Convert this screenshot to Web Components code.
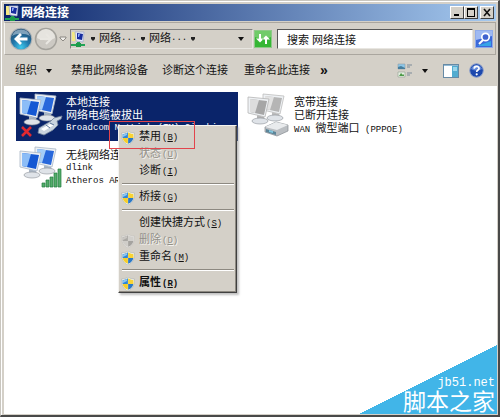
<!DOCTYPE html>
<html lang="zh-CN">
<head>
<meta charset="utf-8">
<title>网络连接</title>
<style>
html, body { height: 100%; margin: 0; }
body {
  font: 11px/13px "Liberation Sans", "Noto Sans CJK SC", sans-serif;
  color: #111;
  --face: #d4d0c8;
  --shade: #808080;
  --navy: #0a246a;
  --mono: "Liberation Mono", "Noto Sans CJK SC", monospace;
}
</style>
</head>
<body>
<network-window></network-window>

<script>
const define = (name, html, setup) => {
  const template = document.createElement('template');
  template.innerHTML = '<style>*{box-sizing:border-box} button{font:inherit;color:inherit;border:0;background:none;padding:0;margin:0;display:flex;align-items:center;justify-content:flex-start;white-space:nowrap} svg{display:block;flex:none}</style>' + html;
  customElements.define(name, class extends HTMLElement {
    constructor() {
      super();
      this.attachShadow({ mode: 'open' }).append(template.content.cloneNode(true));
    }
    connectedCallback() { if (setup) setup(this, this.shadowRoot); }
  });
};

const monitor = (x, y, a, b, c) => `
  <path d="M${x + 9} ${y + 18}l7 2 1 5-8-1z" fill="${c}"/>
  <ellipse cx="${x + 12}" cy="${y + 24}" rx="8" ry="3" fill="#dfe3e8" stroke="#8b9097" stroke-width=".6"/>
  <path d="M${x} ${y}l21 2-4 18-17-4z" fill="#eef1f4" stroke="${c}" stroke-width=".8"/>
  <path d="M${x + 2} ${y + 2}l17 2-3 14-14-3z" fill="${a}"/>
  <path d="M${x + 2} ${y + 2}l9 1-4 13-5-1z" fill="${b}"/>`;

const icons = {
  network: ['0 0 14 16', `<path d="M1 1h7v9H1z" fill="#f4e984"/><path d="M4 1l9 0-1 10-7-1z" fill="#e7eaf8" stroke="#9ba6c8" stroke-width=".7"/><path d="M6 2l6 1-1 6-5-1z" fill="#172c9e"/><path d="M7 3l2 0-1 3-1 0z" fill="#8cabf4"/><path d="M6 11h3v2h5v2H0v-2h6z" fill="#21a456"/><path d="M5 12h5v4H5z" fill="#1d9b4c"/>`],
  shield: ['0 0 14 14', `<path d="M7 0C5 1.500 3 2 .5 2 .5 8 2 12 7 14 12 12 13.500 8 13.500 2 11 2 9 1.500 7 0z" fill="#f4f5ee" stroke="#aab0ae" stroke-width=".6"/><path d="M6.900 1.300C5 2.500 3.500 3 1.600 3.100V7h5.300z" fill="#2d86d8"/><path d="M7.100 1.300C9 2.500 10.500 3 12.400 3.100V7H7.100z" fill="#f8d335"/><path d="M6.900 7v5.800C3.500 11.500 2 9.500 1.700 7z" fill="#f4cd2c"/><path d="M7.100 7v5.800C10.500 11.500 12 9.500 12.300 7z" fill="#2d79c6"/><path d="M2 3.500l4-1.500v2l-4 2z" fill="#8cc5ef"/>`],
  local: ['0 0 46 48', monitor(18, 2, '#2868db', '#a4cdf8', '#a9b7c7') + monitor(3, 6, '#1558d3', '#8cbdf7', '#aab6c5') + `<path d="M22 36l12-7 3-3 8-2-1 3-4 2 1 4-5 5-9 5-6-2z" fill="#cad4df" stroke="#73849c" stroke-width=".8"/><path d="M24 37l9-5 4 1-10 6z" fill="#fff"/><path d="M29 33l4 3m0-5l4 2" stroke="#5f789b"/><path d="M5 35l9 9m0-9l-9 9" stroke="#df2930" stroke-width="2.600"/>`],
  wireless: ['0 0 46 48', monitor(18, 2, '#2868db', '#a4cdf8', '#a9b7c7') + monitor(3, 6, '#1558d3', '#8cbdf7', '#aab6c5') + `<g fill="#54ad6b" stroke="#247d40" stroke-width=".7"><path d="M25 38h3v4h-3zM29 35h3v7h-3zM33 32h3v10h-3zM37 28h3v14h-3zM41 24h3v18h-3z"/></g>`],
  broadband: ['0 0 46 48', monitor(18, 2, '#b5b5b5', '#e2e2e2', '#bdbdbd') + monitor(3, 5, '#a6a6a6', '#dddddd', '#b5b5b5') + `<path d="M20 35l11-5 12 3v6l-11 5-12-4z" fill="#babec2" stroke="#858b90" stroke-width=".7"/><path d="M20 35l11-5 12 3-11 5z" fill="#e9ebed"/><path d="M21 37l10 3v3l-10-3z" fill="#5c8599"/><path d="M24 38l4 1v2l-4-1z" fill="#82c7df"/>`],
  back: ['0 0 24 26', `<defs><radialGradient id="g" cx=".5" cy=".9" r=".8"><stop stop-color="#3fc9ec"/><stop offset=".5" stop-color="#2179ad"/><stop offset="1" stop-color="#245076"/></radialGradient></defs><circle cx="12" cy="13" r="11.300" fill="#a9b0b5"/><circle cx="12" cy="13" r="10.300" fill="url(#g)"/><path d="M3 10a9.500 9.500 0 0 1 18 0c-5-3-13-3-18 0z" fill="#b0cbdc" opacity=".65"/><path d="M18.500 13H7m5-5l-5 5 5 5" fill="none" stroke="#fff" stroke-width="2.800"/>`],
  forward: ['0 0 24 26', `<circle cx="12" cy="13" r="10.500" fill="#ccc9c3" stroke="#a4a29c" stroke-width="1.500"/><path d="M3 12a9 9 0 0 1 18 0c-5 3-13 3-18 0z" fill="#e6e4df"/><path d="M6 13h11m-5-5l5 5-5 5" fill="none" stroke="#e9e7e2" stroke-width="2"/>`],
  history: ['0 0 8 6', `<path d="M1 1h6v1L4 5 1 2z" fill="#f0eeea" stroke="#77746f" stroke-width=".8"/>`],
  arrow: ['0 0 6 4', `<path d="M0 0h6L3 4z" fill="#111"/>`],
  dot: ['0 0 4 4', `<path d="M0 0h4v2L2 4 0 2z" fill="#222"/>`],
  refresh: ['0 0 18 18', `<rect x=".5" y=".5" width="17" height="17" fill="#35b634" stroke="#8dc987"/><path d="M1 1h16v6c-5 3-11 2-16 0z" fill="#70cb69"/><path d="M12 14V9M6 4v5" stroke="#fff" stroke-width="2"/><path d="M8 9.500l4-4 4 4zM2 8.500l4 4 4-4z" fill="#fff"/>`],
  search: ['0 0 18 18', `<rect x=".5" y=".5" width="17" height="17" fill="#3c69d9" stroke="#8fabea"/><path d="M1 1h16v5L1 10z" fill="#9eb9f2"/><path d="M2 16h14v-5z" fill="#35a4e8"/><circle cx="10.500" cy="7" r="3.700" fill="#3f62cf" stroke="#fff" stroke-width="1.700"/><path d="M8 10l-4 4" stroke="#fff" stroke-width="2"/>`],
  views: ['0 0 16 16', `<path d="M1 1h7v5H1z" fill="#8cc6e8" stroke="#8d9da7" stroke-width=".6"/><path d="M1 4l3-1 4 2v1H1z" fill="#477e9d"/><path d="M1 9h7v5H1z" fill="#e6efe3" stroke="#929d91" stroke-width=".6"/><path d="M2 13l2-3 2 2 1-1v2z" fill="#4f9b49"/><path d="M10 2h5M10 4h3M10 10h5M10 12h3" stroke="#7c8b99"/>`],
  pane: ['0 0 16 14', `<rect x=".5" y=".5" width="15" height="13" fill="#fff" stroke="#668aa5"/><path d="M1 1h14v1H1z" fill="#92bad5"/><path d="M9 2h6v11H9z" fill="#51acd0"/><path d="M10 3h4v4h-4z" fill="#9cd6eb"/>`],
  help: ['0 0 15 15', `<circle cx="7.500" cy="7.500" r="6.800" fill="#1d48ad" stroke="#8c9fcb"/><path d="M2 6a5.800 5.800 0 0 1 11 0c-4 2-7 2-11 0z" fill="#5f86d7"/><path d="M5.200 5.700c0-3 4.800-3 4.800-.3 0 1.700-2.300 1.600-2.300 3.500" fill="none" stroke="#fff" stroke-width="1.700"/><circle cx="7.700" cy="11.300" r="1.100" fill="#fff"/>`],
  minimize: ['0 0 10 9', `<path d="M2 6h5v2H2z"/>`],
  maximize: ['0 0 10 9', `<path d="M1 0h8v9H1zM2 2v6h6V2z" fill-rule="evenodd"/>`],
  close: ['0 0 10 9', `<path d="M2 1l6 7M8 1L2 8" stroke="#111" stroke-width="1.600"/>`]
};

define('ui-icon', `<style>:host{display:block;flex:none}span{display:block}</style><span></span>`, (el, root) => {
  const [box, art] = icons[el.getAttribute('name')];
  const [, , w, h] = box.split(' ');
  root.querySelector('span').innerHTML = `<svg viewBox="${box}" width="${w}" height="${h}" aria-hidden="true">${art}</svg>`;
});

define('title-bar', `<style>
  :host{display:flex;align-items:center;height:17px;padding:0 2px 0 1px;background:linear-gradient(90deg,var(--navy),#a6caf0);color:#fff}
  b{flex:1;margin-left:2px;font-size:12px;line-height:16px}
  button{width:14px;height:13px;justify-content:center;background:var(--face);border:1px solid;border-color:#fff #404040 #404040 #fff}
  button:last-child{margin-left:2px}
</style>
<ui-icon name="network"></ui-icon><b><slot></slot></b>
<button aria-label="最小化"><ui-icon name="minimize"></ui-icon></button>
<button aria-label="最大化"><ui-icon name="maximize"></ui-icon></button>
<button aria-label="关闭"><ui-icon name="close"></ui-icon></button>`);

define('nav-bar', `<style>
  :host{display:flex;align-items:center;height:33px;margin-top:1px;padding:0 2px 0 4px;border:1px solid;border-color:#aaa69f #aaa69f #aaa69f #f4f3f0}
  .forward{margin-left:1px}
  .history{margin:0 3px 0 1px}
  .address{display:flex;align-items:center;flex:181 1 0;min-width:0;height:20px;border:1px solid;border-color:var(--shade) #e8e6e1 #e8e6e1 var(--shade)}
  .crumb{width:50px;gap:4px}
  .first{margin-left:6px}
  .dots{font:9px/13px var(--mono)}
  .crumb span{margin-left:-4px}
  .drop{margin-left:auto;padding:4px 8px}
  .refresh{margin:0 5px 0 1px}
  input{flex:176 1 0;min-width:0;height:20px;margin:0 2px 0 0;padding:0 9px;font:inherit;color:#111;background:#fff;border:1px solid;border-color:#555 #e8e6e1 #e8e6e1 #555;border-radius:0;outline:0}
</style>
<button aria-label="后退"><ui-icon name="back"></ui-icon></button>
<button class="forward" aria-label="前进"><ui-icon name="forward"></ui-icon></button>
<button class="history" aria-label="历史"><ui-icon name="history"></ui-icon></button>
<div class="address">
  <ui-icon name="network"></ui-icon>
  <button class="crumb first"><ui-icon name="dot"></ui-icon>网络<span class="dots">...</span></button>
  <button class="crumb"><ui-icon name="dot"></ui-icon>网络<span class="dots">...</span></button>
  <button aria-label="展开"><ui-icon name="dot"></ui-icon></button>
  <button class="drop" aria-label="地址列表"><ui-icon name="arrow"></ui-icon></button>
</div>
<button class="refresh" aria-label="刷新"><ui-icon name="refresh"></ui-icon></button>
<input type="text" aria-label="搜索" value="搜索 网络连接">
<button aria-label="搜索"><ui-icon name="search"></ui-icon></button>`);

define('command-bar', `<style>
  :host{display:flex;align-items:center;height:31px;padding:0 12px 0 11px}
  .menu{gap:9px;margin-right:19px}
  .near{margin-right:14px}
  .far{margin-right:16px}
  .more{margin-left:10px;font-size:14px;font-weight:bold}
  .right{display:flex;align-items:center;margin-left:auto}
  .views{gap:9px;margin-right:15px}
  .pane{margin-right:10px}
</style>
<button class="menu">组织<ui-icon name="arrow"></ui-icon></button>
<button class="near">禁用此网络设备</button>
<button class="far">诊断这个连接</button>
<button>重命名此连接</button>
<button class="more" aria-label="更多">»</button>
<div class="right">
  <button class="views" aria-label="视图"><ui-icon name="views"></ui-icon><ui-icon name="arrow"></ui-icon></button>
  <button class="pane" aria-label="预览窗格"><ui-icon name="pane"></ui-icon></button>
  <button aria-label="帮助"><ui-icon name="help"></ui-icon></button>
</div>`);

define('connection-tile', `<style>
  :host{display:flex;gap:3px;height:49px;padding-left:1px;overflow:hidden;white-space:nowrap}
  :host([selected]){background:var(--navy);color:#fff}
  .text{padding-top:4px;min-width:0}
  ::slotted(*){display:block}
</style>
<div class="icon"></div><div class="text"><slot></slot></div>`, (el, root) => {
  root.querySelector('.icon').innerHTML = `<ui-icon name="${el.getAttribute('icon')}"></ui-icon>`;
});

// An item shows its label followed by its underlined access key.
define('menu-item', `<style>
  :host{display:block}
  button{width:100%;height:17px;gap:4px}
  .slot{width:14px;height:14px}
  .key{margin-left:1px;font:9px/13px var(--mono)}
  :host([disabled]) button{color:#929088;text-shadow:1px 1px #f4f3f0}
  :host([disabled]) .slot{filter:grayscale(1);opacity:.45}
  :host([default]) button, :host([default]) .key{font-weight:bold}
</style>
<button role="menuitem"><span class="slot"></span><span><slot></slot><span class="key">(<u></u>)</span></span></button>`, (el, root) => {
  root.querySelector('u').textContent = el.getAttribute('key');
  root.querySelector('button').disabled = el.hasAttribute('disabled');
  if (el.hasAttribute('shield')) root.querySelector('.slot').innerHTML = '<ui-icon name="shield"></ui-icon>';
});

define('context-menu', `<style>
  :host{display:block;position:absolute;width:119px;padding:3px 1px 0 2px;box-sizing:border-box;background:var(--face);border:1px solid;border-color:#f4f3f0 #404040 #404040 #f4f3f0;box-shadow:inset -1px -1px #8d8981,2px 2px 2px #8888}
  ::slotted(hr){height:2px;box-sizing:border-box;margin:3px 1px 4px;border:0;border-top:1px solid #8d8981;border-bottom:1px solid #fff}
</style><div role="menu"><slot></slot></div>`);

define('site-watermark', `<style>
  :host{display:flex;flex-direction:column;align-items:flex-end;justify-content:flex-end;position:absolute;right:0;bottom:0;width:138px;height:69px;padding-right:2px;box-sizing:border-box;color:#fff;background:linear-gradient(to bottom right,transparent 50%,#41b5e8 50%)}
  .site{font:12px/14px var(--mono)}
  .name{font-size:23px;line-height:24px}
</style><span class="site">jb51.net</span><span class="name">脚本之家</span>`);

define('network-window', `<style>
  :host{display:flex;flex-direction:column;min-height:100vh;box-sizing:border-box;padding:2px 1px 1px 1px;background:var(--face);border:1px solid;border-color:#c9c6bf #494949 #494949 #c9c6bf;border-right-width:2px;border-bottom-width:2px;box-shadow:inset 1px 1px #fff}
  header{padding:1px 1px 0 2px}
  main{position:relative;flex:1;margin-left:2px;padding:6px 12px;background:#fff}
  .tiles{display:grid;grid-template-columns:repeat(auto-fill,222px);gap:4px 6px}
  .latin{font:9px/13px var(--mono)}
  context-menu{left:114px;top:39px}
  .mark{position:absolute;left:105px;top:35px;width:86px;height:28px;border:1px solid #e2444c;pointer-events:none}
</style>
<header>
  <title-bar>网络连接</title-bar>
  <nav-bar></nav-bar>
  <command-bar></command-bar>
</header>
<main>
  <div class="tiles">
    <connection-tile icon="local" selected>
      <span>本地连接</span><span>网络电缆被拔出</span><span class="latin">Broadcom NetLink (TM) Gigabi...</span>
    </connection-tile>
    <connection-tile icon="broadband">
      <span>宽带连接</span><span>已断开连接</span><span><span class="latin">WAN </span>微型端口<span class="latin"> (PPPOE)</span></span>
    </connection-tile>
    <connection-tile icon="wireless">
      <span>无线网络连接</span><span class="latin">dlink</span><span class="latin">Atheros AR</span>
    </connection-tile>
  </div>
  <context-menu>
    <menu-item key="B" shield>禁用</menu-item>
    <menu-item key="U" disabled>状态</menu-item>
    <menu-item key="I">诊断</menu-item>
    <hr>
    <menu-item key="G" shield>桥接</menu-item>
    <hr>
    <menu-item key="S">创建快捷方式</menu-item>
    <menu-item key="D" shield disabled>删除</menu-item>
    <menu-item key="M" shield>重命名</menu-item>
    <hr>
    <menu-item key="R" shield default>属性</menu-item>
  </context-menu>
  <div class="mark"></div>
  <site-watermark></site-watermark>
</main>`);
</script>
</body>
</html>
